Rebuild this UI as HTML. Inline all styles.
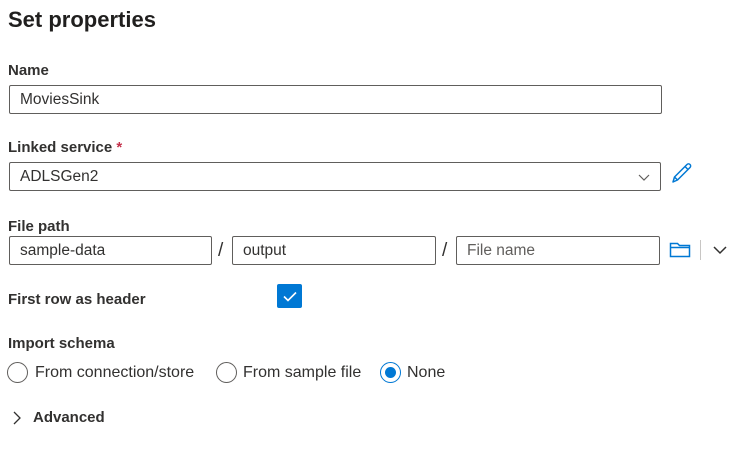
<!DOCTYPE html>
<html><head><style>
body{margin:0;width:753px;height:473px;background:#fff;font-family:"Liberation Sans",sans-serif;color:#323130;position:relative;overflow:hidden}
.a{position:absolute;white-space:nowrap}
.t{font-size:22px;font-weight:600;color:#201f1e}
.l{font-size:15px;font-weight:700;color:#323130}
.in{position:absolute;box-sizing:border-box;border:1px solid #605e5c;border-radius:2px;height:29px;font-size:15.5px;line-height:28px;padding-left:10px;color:#323130}
.rad{position:absolute;box-sizing:border-box;width:21px;height:21px;border:1px solid #605e5c;border-radius:50%}
.tx{font-size:16px;color:#323130}
</style></head><body>
<div class="a t" style="left:8px;top:7px">Set properties</div>
<div class="a l" style="left:8px;top:62px">Name</div>
<div class="in" style="left:9px;top:85px;width:653px">MoviesSink</div>
<div class="a l" style="left:8px;top:139px">Linked service <span style="color:#c4314b">*</span></div>
<div class="in" style="left:9px;top:162px;width:652px">ADLSGen2</div>
<svg class="a" style="left:636px;top:172px" width="16" height="12"><path d="M3 3l5 5 5-5" fill="none" stroke="#605e5c" stroke-width="1.2"/></svg>
<svg class="a" style="left:670px;top:161px" width="24" height="24"><path d="M3 21l1.5-5L17 3.5a2 2 0 0 1 3 3L7.5 19zM15 5.5l3 3M4.5 16l3 3" fill="none" stroke="#0078d4" stroke-width="1.5" stroke-linejoin="round"/></svg>
<div class="a l" style="left:8px;top:218px">File path</div>
<div class="in" style="left:9px;top:236px;width:203px">sample-data</div>
<div class="a tx" style="left:218px;top:240px;font-size:19px">/</div>
<div class="in" style="left:232px;top:236px;width:204px">output</div>
<div class="a tx" style="left:442px;top:240px;font-size:19px">/</div>
<div class="in" style="left:456px;top:236px;width:204px;color:#605e5c">File name</div>
<svg class="a" style="left:669px;top:240px" width="24" height="20"><path d="M1.5 3.5h7l2 2h10v11h-19z M1.5 7.5h19" fill="none" stroke="#0078d4" stroke-width="1.5"/></svg>
<div class="a" style="left:700px;top:240px;width:1px;height:20px;background:#c8c6c4"></div>
<svg class="a" style="left:711px;top:243px" width="18" height="14"><path d="M3 4l6 6 6-6" fill="none" stroke="#323130" stroke-width="1.5"/></svg>
<div class="a l" style="left:8px;top:291px">First row as header</div>
<div class="a" style="left:277px;top:284px;width:25px;height:24px;background:#0078d4;border-radius:2px"><svg width="25" height="24"><path d="M7 12.5l4 4 8-8" fill="none" stroke="#fff" stroke-width="1.6"/></svg></div>
<div class="a l" style="left:8px;top:335px">Import schema</div>
<div class="rad" style="left:7px;top:362px"></div>
<div class="a tx" style="left:35px;top:364px">From connection/store</div>
<div class="rad" style="left:216px;top:362px"></div>
<div class="a tx" style="left:243px;top:364px">From sample file</div>
<div class="rad" style="left:380px;top:362px;border-color:#0078d4"><div style="position:absolute;left:4px;top:4px;width:11px;height:11px;border-radius:50%;background:#0078d4"></div></div>
<div class="a tx" style="left:407px;top:364px">None</div>
<svg class="a" style="left:11px;top:410px" width="12" height="16"><path d="M3 2l6 6-6 6" fill="none" stroke="#323130" stroke-width="1.3"/></svg>
<div class="a l" style="left:33px;top:409px;font-size:15px">Advanced</div>
</body></html>
